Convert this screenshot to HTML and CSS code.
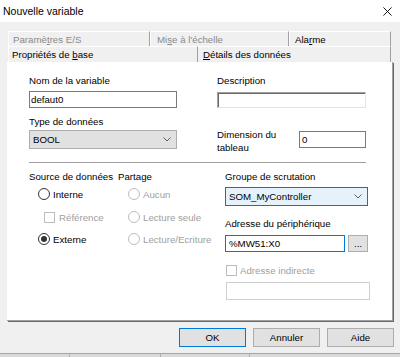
FILE: index.html
```html
<!DOCTYPE html>
<html>
<head>
<meta charset="utf-8">
<link rel="stylesheet" href="styles.css">
</head>
<body>
<div class="titlebar">
  <span class="title">Nouvelle variable</span>
  <svg class="close" viewBox="0 0 10 10"><path d="M0.5 0.5 L9.5 9.5 M9.5 0.5 L0.5 9.5" stroke="#000" stroke-width="1" fill="none"/></svg>
</div>
<div class="tabs">
  <div class="tabrow back">
    <div class="tab t1 dim"><span>Paramè<u>t</u>res E/S</span></div>
    <div class="tab t2 dim"><span>Mi<u>s</u>e à l'échelle</span></div>
    <div class="tab t3"><span>Ala<u>r</u>me</span></div>
  </div>
  <div class="tabrow front">
    <div class="tab f1 sel"><span>Propriétés de <u>b</u>ase</span></div>
    <div class="tab f2"><span><u>D</u>étails des données</span></div>
  </div>
</div>
<div class="panel">
  <div class="top">
    <div class="col">
      <div class="label">Nom de la variable</div>
      <div class="input name">defaut0</div>
      <div class="label l2">Type de données</div>
      <div class="select gray">
        <span>BOOL</span>
        <svg class="chev" viewBox="0 0 8 5"><path d="M0.5 0.5 L4 4 L7.5 0.5" stroke="#606060" fill="none"/></svg>
      </div>
    </div>
    <div class="col">
      <div class="label">Description</div>
      <div class="input sunken"></div>
      <div class="dim-row">
        <div class="label two">Dimension du<br>tableau</div>
        <div class="input dimval">0</div>
      </div>
    </div>
  </div>
  <div class="sep"></div>
  <div class="bottom">
    <div class="col-src">
      <div class="label">Source de données</div>
      <div class="opt o1"><span class="radio"></span><span class="otext">Interne</span></div>
      <div class="opt o2 disabled"><span class="check off"></span><span class="otext ct">Référence</span></div>
      <div class="opt o3"><span class="radio on"></span><span class="otext">Externe</span></div>
    </div>
    <div class="col-share">
      <div class="label">Partage</div>
      <div class="opt o1 disabled"><span class="radio off"></span><span class="otext">Aucun</span></div>
      <div class="opt o2 disabled"><span class="radio off"></span><span class="otext">Lecture seule</span></div>
      <div class="opt o3 disabled"><span class="radio off"></span><span class="otext">Lecture/Ecriture</span></div>
    </div>
    <div class="col-right">
      <div class="label">Groupe de scrutation</div>
      <div class="select blue">
        <span>SOM_MyController</span>
        <svg class="chev" viewBox="0 0 8 5"><path d="M0.5 0.5 L4 4 L7.5 0.5" stroke="#606060" fill="none"/></svg>
      </div>
      <div class="label l3">Adresse du périphérique</div>
      <div class="addr-row">
        <div class="input addr">%MW51:X0</div>
        <div class="dots">...</div>
      </div>
      <div class="opt indirect disabled"><span class="check off"></span><span class="otext">Adresse indirecte</span></div>
      <div class="input indirect-input"></div>
    </div>
  </div>
</div>
<div class="buttons">
  <div class="btn default">OK</div>
  <div class="btn">Annuler</div>
  <div class="btn">Aide</div>
</div>
<div class="strip">
  <div class="seg s1"></div>
  <div class="seg s2"></div>
  <div class="seg s3"></div>
  <div class="seg s4"></div>
</div>
</body>
</html>
```
FILE: styles.css
```css
* { box-sizing: border-box; }
body {
  margin: 0;
  width: 400px;
  height: 357px;
  overflow: hidden;
  background: #f0f0f0;
  font-family: "Liberation Sans", Arial, sans-serif;
  font-size: 9.7px;
  color: #000;
}
u { text-decoration: underline; text-underline-offset: 1px; }

.titlebar {
  height: 22px;
  background: #fff;
  display: flex;
  align-items: center;
  justify-content: space-between;
  padding: 0 8px 0 3px;
}
.title { font-size: 10.5px; }
.close { width: 9px; height: 9px; display: block; }

.tabs { margin: 9px 0 0 8px; width: 384px; }
.tabrow { display: flex; }
.tabrow.back { height: 15px; }
.tabrow.front { height: 16px; }
.tab {
  height: 100%;
  display: flex;
  align-items: center;
  border-top: 1px solid #fff;
  border-left: 1px solid #fff;
  border-right: 1px solid #a0a0a0;
  background: #f0f0f0;
  white-space: nowrap;
}
.tab.dim { color: #8a8a8a; }
.t1 { width: 142px; padding-left: 4px; }
.t2 { width: 139px; padding-left: 6px; }
.t3 { width: 102px; padding-left: 5px; }
.f1 { width: 189px; padding-left: 3px; border-right: none; }
.f2 { width: 194px; padding-left: 5px; border-left: 1px solid #a0a0a0; }

.panel {
  margin-left: 7px;
  width: 386px;
  height: 259px;
  background: #fff;
  border-right: 1px solid #a0a0a0;
  border-bottom: 1px solid #a0a0a0;
  box-shadow: 1px 1px 0 #696969;
  padding: 13px 0 0 22px;
}
.top {
  display: grid;
  grid-template-columns: 148px 149px;
  column-gap: 40px;
}
.label { line-height: 12px; height: 12px; white-space: nowrap; }
.label.two { line-height: 13px; height: 26px; width: 82px; }
.l2 { margin-top: 8px; }
.l3 { margin-top: 12px; }

.input {
  height: 17px;
  border: 1px solid #7a7a7a;
  background: #fff;
  line-height: 15px;
  padding-left: 2px;
  white-space: nowrap;
}
.name { margin-top: 4px; padding-left: 1px; }
.sunken {
  margin-top: 5px;
  height: 16px;
  border-color: #a0a0a0 #e3e3e3 #e3e3e3 #a0a0a0;
  box-shadow: inset 1px 1px 0 #696969;
}
.dim-row { display: flex; align-items: flex-start; margin-top: 20px; }
.dimval { margin-top: 3px; width: 67px; }

.select {
  height: 19px;
  display: flex;
  align-items: center;
  justify-content: space-between;
  padding: 0 5px 0 3px;
  border: 1px solid #adadad;
}
.select.gray { margin-top: 2px; background: #e1e1e1; }
.select.blue { margin-top: 4px; width: 143px; background: #e5f1fb; border-color: #0078d7; }
.chev { width: 8px; height: 5px; display: block; }

.sep { margin-top: 8px; width: 337px; height: 1px; background: #a0a0a0; }

.bottom { display: flex; margin-top: 8px; }
.col-src { width: 89px; }
.col-share { width: 107px; }
.col-right { width: 145px; }

.opt { display: flex; align-items: center; height: 14px; white-space: nowrap; }
.o1 { margin-top: 4px; }
.o2 { margin-top: 9px; }
.o3 { margin-top: 8px; }
.disabled { color: #a0a0a0; }
.radio {
  width: 12px;
  height: 12px;
  border-radius: 50%;
  border: 1px solid #333;
  background: #fff;
  display: flex;
  align-items: center;
  justify-content: center;
  flex: none;
}
.radio.on::after {
  content: "";
  width: 6px;
  height: 6px;
  border-radius: 50%;
  background: #333;
}
.radio.off { border-color: #bcbcbc; }
.col-src .radio { margin-left: 9px; }
.col-share .radio { margin-left: 10px; }
.otext { margin-left: 3px; }
.check {
  width: 11px;
  height: 11px;
  border: 1px solid #333;
  background: #fff;
  flex: none;
}
.check.off { border-color: #bcbcbc; }
.col-src .check { margin-left: 15px; }
.ct { margin-left: 4px; }

.addr-row { display: flex; margin-top: 5px; }
.addr { width: 120px; border-color: #0078d7; padding-left: 3px; }
.dots {
  width: 20px;
  height: 17px;
  margin-left: 3px;
  background: #e1e1e1;
  border: 1px solid #adadad;
  text-align: center;
  line-height: 15px;
}
.indirect { margin-top: 11px; }
.indirect .check { margin-left: 1px; }
.indirect-input { margin: 5px 0 0 1px; width: 144px; height: 18px; border-color: #cfcfcf; }

.buttons {
  display: flex;
  justify-content: flex-end;
  gap: 7px;
  margin-top: 7px;
  padding-right: 6px;
}
.btn {
  width: 67px;
  height: 19px;
  border: 1px solid #adadad;
  background: #e1e1e1;
  text-align: center;
  line-height: 17px;
}
.btn.default { border-color: #0078d7; }

.strip {
  margin-top: 6px;
  height: 4px;
  border-top: 1px solid #a6a6a6;
  background: #dadada;
  display: flex;
}
.seg { height: 100%; border-right: 1px solid #b0b0b0; }
.s1 { width: 70px; }
.s2 { width: 91px; }
.s3 { width: 89px; }
.s4 { flex: 1; border-right: none; }
```
